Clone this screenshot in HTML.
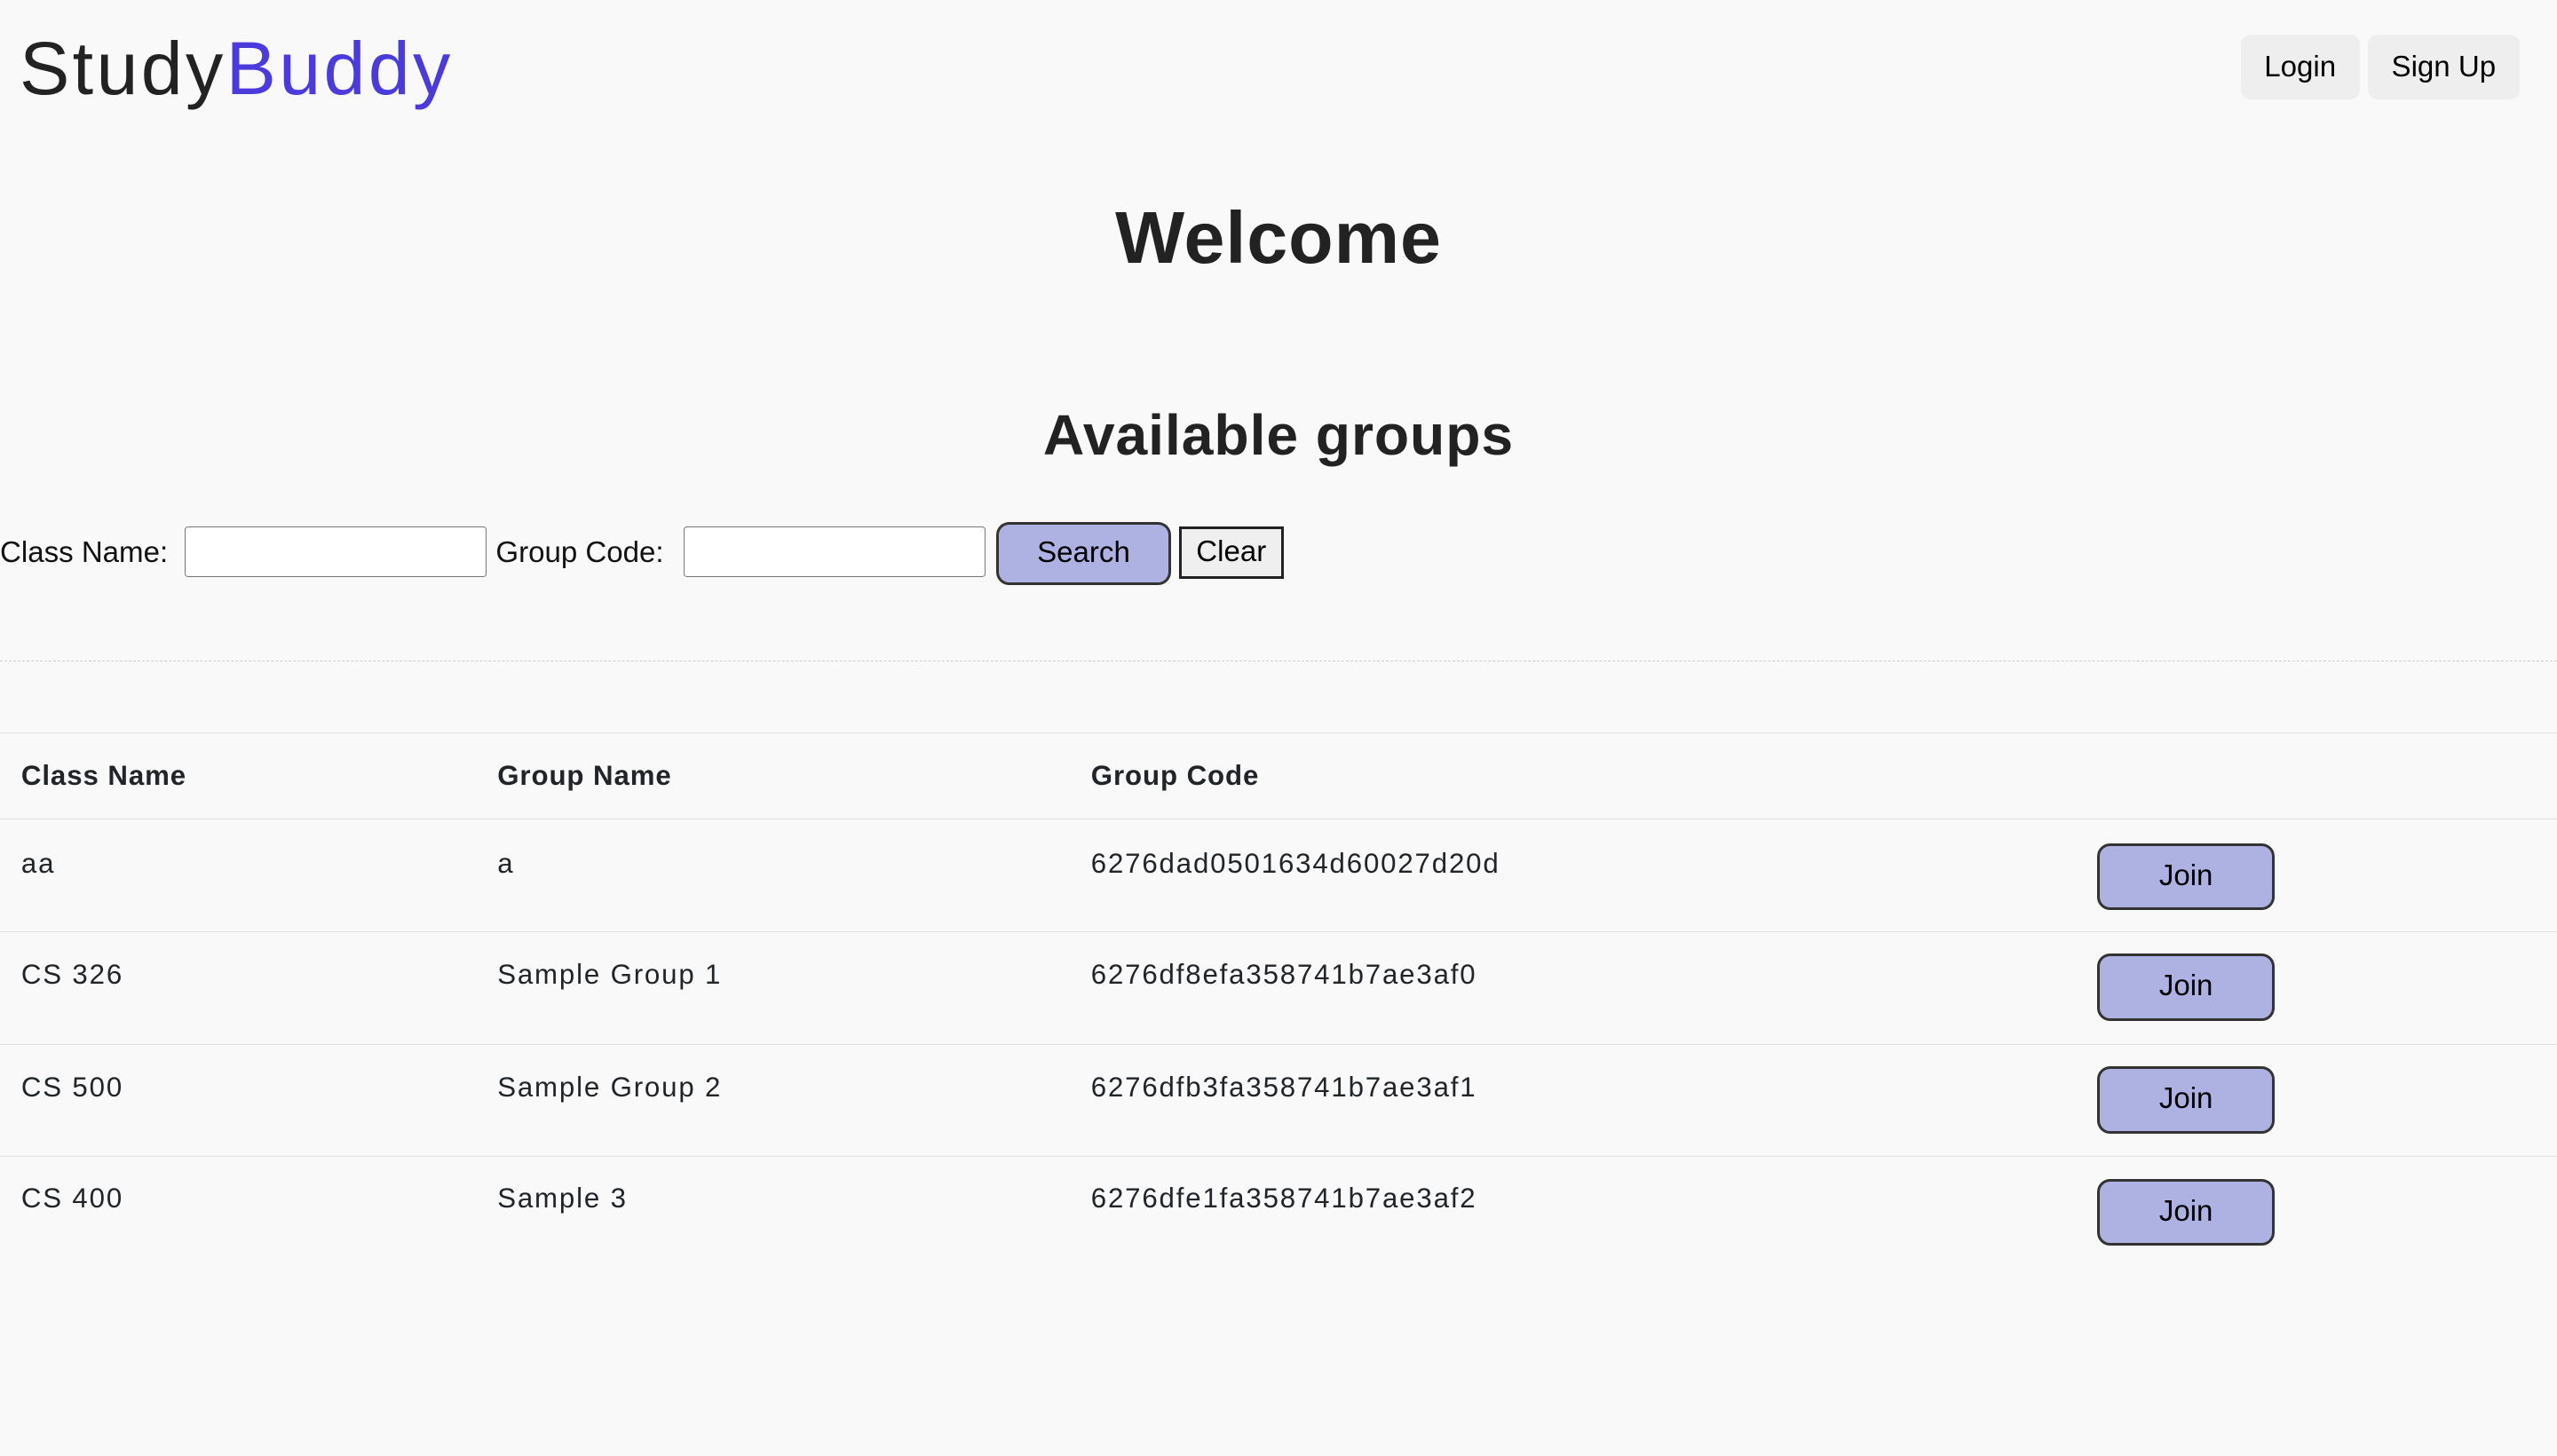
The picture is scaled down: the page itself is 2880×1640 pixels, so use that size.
<!DOCTYPE html>
<html><head><meta charset="utf-8"><style>
html,body{margin:0;padding:0;background:#f9f9f9;}
body{width:1568px;height:893px;zoom:1.83673;position:relative;overflow:hidden;font-family:"Liberation Sans",sans-serif;color:#212529;}
.a{position:absolute;white-space:nowrap;}
.logo{left:12px;top:14px;font-size:46px;line-height:56px;color:#222;letter-spacing:1.8px;}
.logo span{color:#4b3bdc;}
.nb{top:21px;height:40px;background:#eee;border-radius:6px;font-size:18px;line-height:40px;text-align:center;color:#000;}
h1,h2{margin:0;position:absolute;left:0;width:1568px;text-align:center;font-weight:bold;color:#222;}
h1{top:118px;font-size:45px;line-height:56px;letter-spacing:0.5px;}
h2{top:243px;font-size:35px;line-height:48px;letter-spacing:0.5px;}
.lbl{top:327px;font-size:18px;line-height:24px;color:#111;}
.inp{top:323px;height:30px;background:#fff;border:1px solid #767676;border-radius:2px;}
.btn{background:#aeb2e2;border:2px solid #333;border-radius:8px;font-size:18px;text-align:center;color:#000;box-sizing:border-box;}
.clr{top:323px;left:723px;width:64px;height:32px;background:#efefef;border:2px solid #222;box-sizing:border-box;font-size:18px;line-height:28px;text-align:center;color:#000;}
.dash{left:0;width:1568px;top:405px;border-top:1px dashed #ccc;}
.hr{left:0;width:1568px;height:0;border-top:1px solid #dee2e6;}
.th{top:465px;font-size:17px;font-weight:bold;line-height:22px;color:#212529;letter-spacing:0.5px;}
.td{font-size:17px;line-height:22px;color:#212529;letter-spacing:1px;}
</style></head><body>
<div class="a logo">Study<span>Buddy</span></div>
<div class="a nb" style="left:1374px;width:73px">Login</div>
<div class="a nb" style="left:1452px;width:93px">Sign Up</div>
<h1>Welcome</h1>
<h2>Available groups</h2>
<div class="a lbl" style="left:0">Class Name:</div>
<div class="a inp" style="left:113px;width:184px"></div>
<div class="a lbl" style="left:304px">Group Code:</div>
<div class="a inp" style="left:419px;width:184px"></div>
<div class="a btn" style="left:611px;top:320px;width:107px;height:39px;line-height:35px">Search</div>
<div class="a clr">Clear</div>
<div class="a dash"></div>
<div class="a hr" style="top:449px"></div>
<div class="a th" style="left:13px">Class Name</div>
<div class="a th" style="left:305px">Group Name</div>
<div class="a th" style="left:669px">Group Code</div>
<div class="a hr" style="top:502px"></div>

<div class="a td" style="left:13px;top:519px">aa</div>
<div class="a td" style="left:305px;top:519px">a</div>
<div class="a td" style="left:669px;top:519px">6276dad0501634d60027d20d</div>
<div class="a btn" style="left:1286px;top:517px;width:109px;height:41px;line-height:37px">Join</div>
<div class="a hr" style="top:571px"></div>

<div class="a td" style="left:13px;top:587px">CS 326</div>
<div class="a td" style="left:305px;top:587px">Sample Group 1</div>
<div class="a td" style="left:669px;top:587px">6276df8efa358741b7ae3af0</div>
<div class="a btn" style="left:1286px;top:585px;width:109px;height:41px;line-height:37px">Join</div>
<div class="a hr" style="top:640px"></div>

<div class="a td" style="left:13px;top:656px">CS 500</div>
<div class="a td" style="left:305px;top:656px">Sample Group 2</div>
<div class="a td" style="left:669px;top:656px">6276dfb3fa358741b7ae3af1</div>
<div class="a btn" style="left:1286px;top:654px;width:109px;height:41px;line-height:37px">Join</div>
<div class="a hr" style="top:709px"></div>

<div class="a td" style="left:13px;top:724px">CS 400</div>
<div class="a td" style="left:305px;top:724px">Sample 3</div>
<div class="a td" style="left:669px;top:724px">6276dfe1fa358741b7ae3af2</div>
<div class="a btn" style="left:1286px;top:723px;width:109px;height:41px;line-height:37px">Join</div>
</body></html>
